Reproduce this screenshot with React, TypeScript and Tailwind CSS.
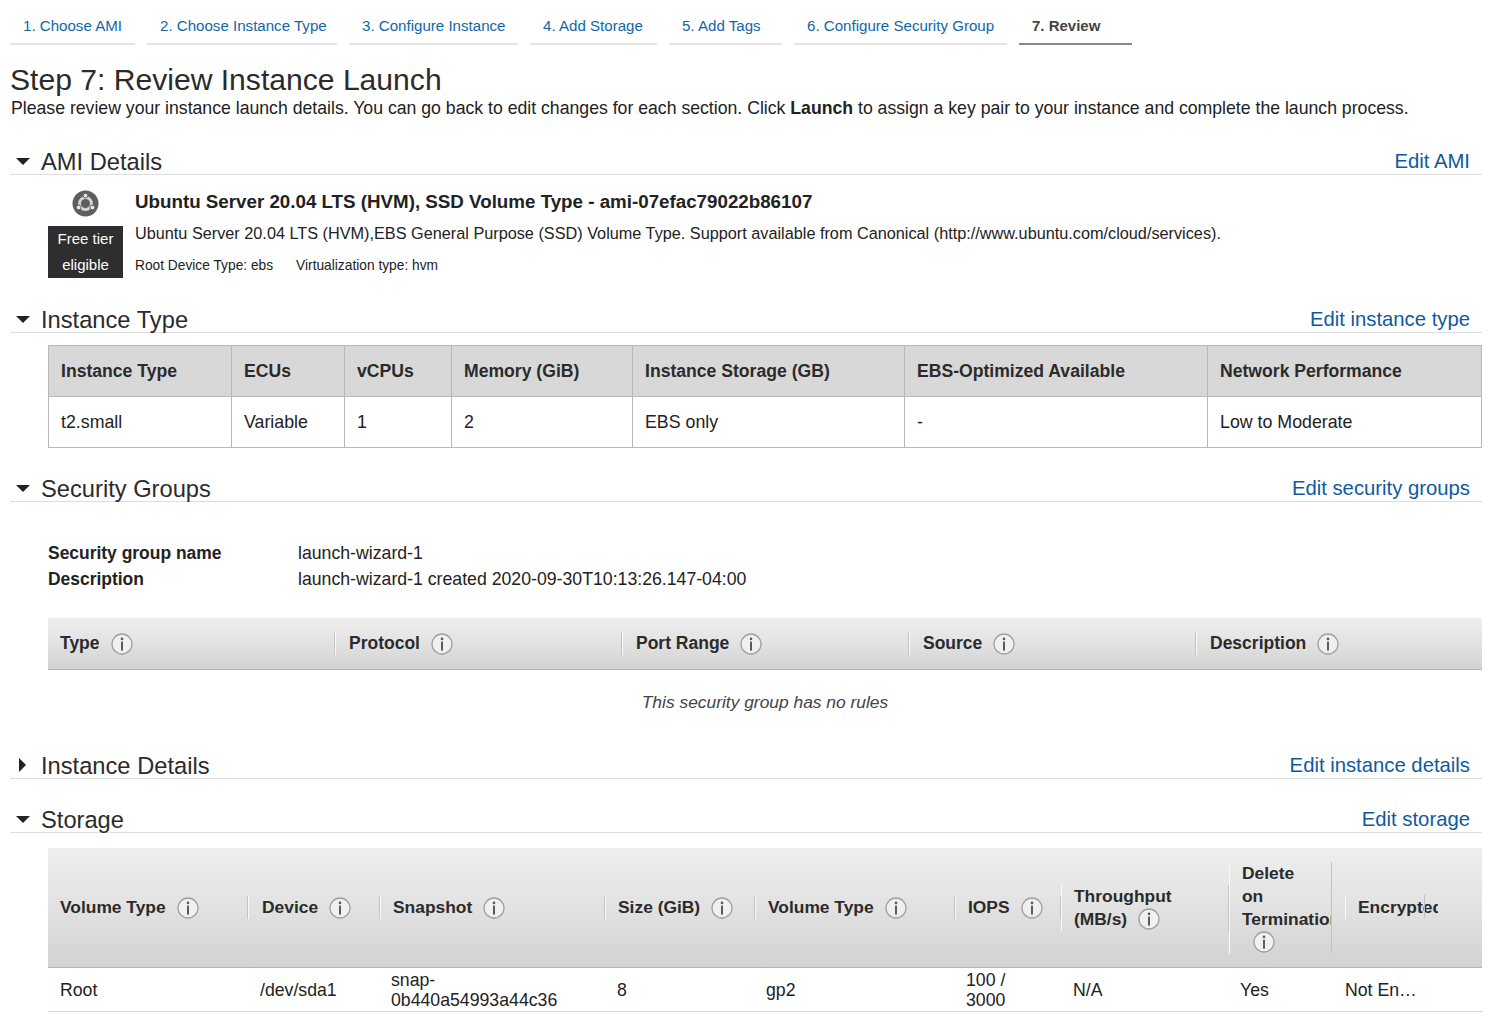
import React from "react";

const tabs = [
  { label: "1. Choose AMI", w: "w-[125px]" },
  { label: "2. Choose Instance Type", w: "w-[190px]" },
  { label: "3. Configure Instance", w: "w-[169px]" },
  { label: "4. Add Storage", w: "w-[127px]" },
  { label: "5. Add Tags", w: "w-[113px]" },
  { label: "6. Configure Security Group", w: "w-[213px]" },
];

function InfoIcon({ className = "" }: { className?: string }) {
  return (
    <svg width="22" height="22" viewBox="0 0 22 22" className={"shrink-0 " + className}>
      <circle cx="11" cy="11" r="10" fill="#f0f0f0" stroke="#a0a0a0" strokeWidth="1.3" />
      <circle cx="11" cy="5.9" r="1.3" fill="#5a5a5a" />
      <rect x="10" y="8.6" width="2" height="9" fill="#5a5a5a" />
    </svg>
  );
}

function UbuntuLogo() {
  return (
    <svg width="27" height="27" viewBox="0 0 27 27">
      <circle cx="13.5" cy="13.5" r="13" fill="#5e5e5e" />
      <circle cx="13.5" cy="13.5" r="6" fill="none" stroke="#d4d4d4" strokeWidth="2.8" />
      <circle cx="13.5" cy="5.6" r="2.4" fill="#e4e4e4" stroke="#5e5e5e" />
      <circle cx="6.6" cy="17.5" r="2.4" fill="#e4e4e4" stroke="#5e5e5e" />
      <circle cx="20.4" cy="17.5" r="2.4" fill="#e4e4e4" stroke="#5e5e5e" />
    </svg>
  );
}

function SectionHead({ title, edit, open = true, className = "" }: { title: string; edit: string; open?: boolean; className?: string }) {
  return (
    <div className={"flex items-end justify-between border-b border-[#dedede] h-[31px] pr-3 " + className}>
      <div className="flex items-center h-[26px]">
        <div className="w-[31px] flex justify-center pr-[6px]">
          {open ? (
            <div className="w-0 h-0 border-l-[7px] border-r-[7px] border-t-[7px] border-l-transparent border-r-transparent border-t-[#222]" />
          ) : (
            <div className="w-0 h-0 border-t-[7px] border-b-[7px] border-l-[7px] border-t-transparent border-b-transparent border-l-[#222]" />
          )}
        </div>
        <h2 className="text-[23.7px] leading-[26px] mt-[1px] text-[#2b2b2b]">{title}</h2>
      </div>
      <a className="text-[20.3px] leading-[26px] text-[#0f5a9e]">{edit}</a>
    </div>
  );
}

const typeCols = [
  { h: "Instance Type", v: "t2.small", w: "w-[182px]" },
  { h: "ECUs", v: "Variable", w: "w-[113px]" },
  { h: "vCPUs", v: "1", w: "w-[107px]" },
  { h: "Memory (GiB)", v: "2", w: "w-[181px]" },
  { h: "Instance Storage (GB)", v: "EBS only", w: "w-[272px]" },
  { h: "EBS-Optimized Available", v: "-", w: "w-[303px]" },
  { h: "Network Performance", v: "Low to Moderate", w: "flex-1" },
];

const ruleCols = ["Type", "Protocol", "Port Range", "Source", "Description"];

// gray hairline with a white one beside it, the white one can run taller
function Divider({ gray = "h-[23px]", white = "h-[23px]" }: { gray?: string; white?: string }) {
  return (
    <div className="flex items-center w-[2px] shrink-0">
      <div className={"w-px bg-[#c2c2c2] " + gray} />
      <div className={"w-px bg-[#fafafa] " + white} />
    </div>
  );
}

function StorageHeader() {
  return (
    <div className="relative flex items-center h-[120px] ml-[38px] bg-gradient-to-b from-[#eeeeee] via-[#e2e2e2] to-[#d2d2d2] border-b border-[#b5b5b5] text-[17.4px] leading-[23px] font-bold text-[#2b2b2b]">
      <div className="w-[199px] pl-3 flex items-center gap-[11px]">Volume Type <InfoIcon /></div>
      <Divider />
      <div className="w-[130px] pl-[13px] flex items-center gap-[11px]">Device <InfoIcon /></div>
      <Divider />
      <div className="w-[223px] pl-[12px] flex items-center gap-[11px]">Snapshot <InfoIcon /></div>
      <Divider />
      <div className="w-[148px] pl-[12px] flex items-center gap-[11px]">Size (GiB) <InfoIcon /></div>
      <Divider />
      <div className="w-[198px] pl-[12px] flex items-center gap-[11px]">Volume Type <InfoIcon /></div>
      <Divider />
      <div className="w-[104px] pl-[12px] flex items-center gap-[11px]">IOPS <InfoIcon /></div>
      <Divider white="h-[46px]" />
      <div className="w-[166px] pl-[12px]">
        <div>Throughput</div>
        <div className="flex items-center gap-[11px]">(MB/s) <InfoIcon /></div>
      </div>
      <Divider gray="h-[46px]" white="h-[93px]" />
      <div className="w-[101px] pl-[12px] overflow-hidden whitespace-nowrap">
        <div>Delete</div>
        <div>on</div>
        <div>Termination</div>
        <InfoIcon className="ml-[11px]" />
      </div>
      <div className="w-px h-[91px] shrink-0 bg-[#c2c2c2]" />
      <div className="w-px h-[23px] ml-[13px] shrink-0 bg-[#fafafa]" />
      <div className="w-[80px] ml-[12px] overflow-hidden whitespace-nowrap">Encrypted</div>
      <div className="absolute left-[1376px] top-[47px] h-[23px] w-px bg-[#c2c2c2]" />
    </div>
  );
}

export default function App() {
  return (
    <div className="h-[1027px] overflow-hidden bg-white pl-[10px] pr-[3px] font-['Liberation_Sans',Arial,sans-serif] text-[#222]">
      <div className="flex gap-3 pt-[7px]">
        {tabs.map((t) => (
          <div key={t.label} className={"h-[38px] pl-[13px] text-[15.1px] leading-[38px] text-[#1166a8] border-b-2 border-[#e4e4e4] whitespace-nowrap " + t.w}>
            {t.label}
          </div>
        ))}
        <div className="h-[38px] w-[113px] pl-[13px] text-[15px] leading-[38px] font-bold text-[#444] border-b-2 border-[#888]">7. Review</div>
      </div>

      <h1 className="text-[30.1px] leading-[36px] mt-[17px] text-[#2b2b2b]">Step 7: Review Instance Launch</h1>
      <p className="text-[17.67px] leading-[20px] ml-px whitespace-nowrap">
        Please review your instance launch details. You can go back to edit changes for each section. Click <b>Launch</b> to assign a key pair to your instance and complete the launch process.
      </p>

      <SectionHead title="AMI Details" edit="Edit AMI" className="mt-[26px]" />
      <div className="flex pl-[38px] h-[127px] pt-[16px]">
        <div className="w-[75px] shrink-0 flex flex-col items-center">
          <div className="mt-[-1px] h-[27px]">
            <UbuntuLogo />
          </div>
          <div className="mt-[9px] w-[75px] h-[52px] bg-[#2e2e2e] text-white text-[15px] leading-[26px] text-center">
            Free tier<br />eligible
          </div>
        </div>
        <div className="pl-[12px]">
          <div className="text-[18.75px] leading-[22px] font-bold">Ubuntu Server 20.04 LTS (HVM), SSD Volume Type - ami-07efac79022b86107</div>
          <div className="text-[16.26px] leading-[20px] mt-[10px]">Ubuntu Server 20.04 LTS (HVM),EBS General Purpose (SSD) Volume Type. Support available from Canonical (http://www.ubuntu.com/cloud/services).</div>
          <div className="flex gap-[23px] text-[13.75px] leading-[18px] mt-[14px]">
            <span>Root Device Type: ebs</span>
            <span>Virtualization type: hvm</span>
          </div>
        </div>
      </div>

      <SectionHead title="Instance Type" edit="Edit instance type" />
      <div className="ml-[38px] mt-[12px] flex border border-[#b8b8b8]">
        {typeCols.map((c, i) => (
          <div key={c.h} className={c.w + (i > 0 ? " border-l border-[#b8b8b8]" : "")}>
            <div className="h-[51px] bg-[#d8d8d8] border-b border-[#b8b8b8] pl-3 text-[17.6px] leading-[50px] font-bold text-[#2b2b2b]">{c.h}</div>
            <div className="h-[50px] pl-3 text-[17.8px] leading-[50px]">{c.v}</div>
          </div>
        ))}
      </div>

      <SectionHead title="Security Groups" edit="Edit security groups" className="mt-[23px]" />
      <div className="ml-[38px] mt-[38px] grid grid-cols-[250px_1fr] text-[17.7px] leading-[26px]">
        <b className="text-[17.45px]">Security group name</b>
        <span>launch-wizard-1</span>
        <b className="text-[17.45px]">Description</b>
        <span>launch-wizard-1 created 2020-09-30T10:13:26.147-04:00</span>
      </div>
      <div className="ml-[38px] mt-[26px] h-[52px] flex items-center bg-gradient-to-b from-[#eeeeee] via-[#e2e2e2] to-[#d2d2d2] border-b border-[#b5b5b5] text-[17.5px] font-bold text-[#2b2b2b]">
        {ruleCols.map((c, i) => (
          <React.Fragment key={c}>
            {i > 0 && <Divider />}
            <div className={(i === 0 ? "w-[286px] pl-3" : "w-[285px] pl-[13px]") + " flex items-center gap-[11px]"}>
              {c} <InfoIcon />
            </div>
          </React.Fragment>
        ))}
      </div>
      <div className="ml-[38px] mt-[21px] text-[17.4px] leading-[22px] italic text-[#444] text-center">
        This security group has no rules
      </div>

      <SectionHead title="Instance Details" edit="Edit instance details" open={false} className="mt-[35px]" />
      <SectionHead title="Storage" edit="Edit storage" className="mt-[23px]" />
      <div className="mt-[15px]">
        <StorageHeader />
        <div className="ml-[38px] h-[44px] flex items-center border-b border-[#d4d4d4] text-[17.7px] leading-[20px]">
          <div className="w-[212px] pl-3">Root</div>
          <div className="w-[131px]">/dev/sda1</div>
          <div className="w-[226px]">snap-<br />0b440a54993a44c36</div>
          <div className="w-[149px]">8</div>
          <div className="w-[200px]">gp2</div>
          <div className="w-[107px]">100 /<br />3000</div>
          <div className="w-[167px]">N/A</div>
          <div className="w-[105px]">Yes</div>
          <div className="w-[75px]">Not En…</div>
        </div>
      </div>
    </div>
  );
}
